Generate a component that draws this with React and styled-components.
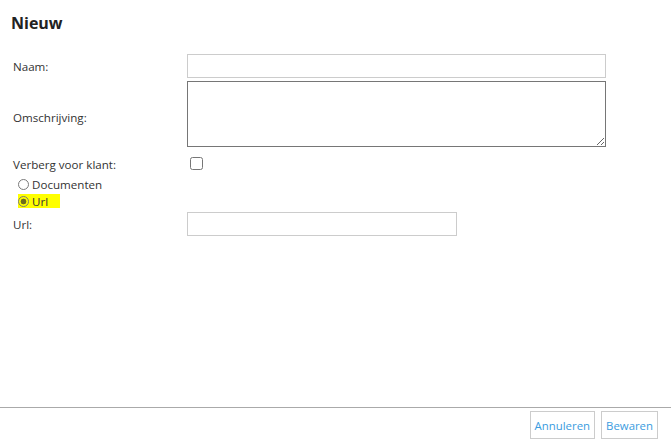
import React from 'react';
import styled, { createGlobalStyle } from 'styled-components';

const GlobalStyle = createGlobalStyle`
  html, body {
    margin: 0;
    padding: 0;
    background: #fff;
  }
  body {
    font-family: "Open Sans", "Liberation Sans", sans-serif;
    font-size: 11.6px;
    color: #333;
  }
`;

const Page = styled.div`
  display: flex;
  flex-direction: column;
  min-height: 100vh;
`;

const Content = styled.div`
  flex: 1;
`;

const Title = styled.h1`
  margin: 11px 0 19px 11px;
  font-size: 16px;
  line-height: 24px;
  font-weight: 700;
  color: #222;
`;

const Form = styled.form`
  display: flex;
  flex-direction: column;
  padding-left: 13px;
`;

const Row = styled.div`
  display: grid;
  grid-template-columns: 174px 1fr;
  align-items: center;
  margin-top: ${(p) => p.$mt || 0}px;
`;

const Label = styled.label`
  line-height: 17px;
  color: #333;
  padding-top: ${(p) => p.$offset || 0}px;
`;

const TextInput = styled.input`
  box-sizing: border-box;
  width: ${(p) => p.$width}px;
  height: 24px;
  margin: 0;
  border: 1px solid #ccc;
  padding: 2px 4px;
  font: inherit;
  outline: none;
`;

const TextArea = styled.textarea`
  box-sizing: border-box;
  width: 419px;
  height: 66px;
  margin: 0;
  border: 1px solid #767676;
  padding: 2px 4px;
  font: inherit;
  outline: none;
`;

const CheckBox = styled.input`
  width: 13px;
  height: 13px;
  margin: 0 0 0 3px;
`;

const RadioGroup = styled.div`
  display: flex;
  flex-direction: column;
  align-items: flex-start;
  margin-top: 3px;
  padding-left: 5px;
`;

const RadioOption = styled.label`
  display: inline-flex;
  align-items: center;
  height: ${(p) => (p.$highlight ? 14 : 17)}px;
  margin: ${(p) => (p.$highlight ? '1px 0 2px' : '0')};
  padding-right: ${(p) => (p.$highlight ? 12 : 0)}px;
  background: ${(p) => (p.$highlight ? '#ffff00' : 'transparent')};
  line-height: 17px;
  color: #333;
`;

const Radio = styled.input`
  appearance: none;
  box-sizing: border-box;
  width: 11px;
  height: 11px;
  margin: 0 3px 0 0;
  border: 1px solid #7a7a7a;
  border-radius: 50%;
  background: transparent;

  &:checked {
    background: radial-gradient(circle, rgba(60, 60, 40, 0.75) 0 2.6px, transparent 3.2px);
  }
`;

const Footer = styled.div`
  display: flex;
  justify-content: flex-end;
  gap: 6px;
  border-top: 1px solid #aaa;
  padding: 3px 13px 3px;
`;

const Button = styled.button`
  box-sizing: border-box;
  height: 28px;
  padding: 0 4px;
  border: 1px solid #ccc;
  background: #fff;
  color: #3a9ce0;
  font-family: "Open Sans", "Liberation Sans", sans-serif;
  font-size: 11.4px;
  cursor: pointer;
`;

export default function App() {
  return (
    <Page>
      <GlobalStyle />
      <Content>
        <Title>Nieuw</Title>
        <Form onSubmit={(e) => e.preventDefault()}>
          <Row>
            <Label htmlFor="naam">Naam:</Label>
            <TextInput id="naam" type="text" $width={419} />
          </Row>
          <Row $mt={3}>
            <Label htmlFor="omschrijving" $offset={6}>Omschrijving:</Label>
            <TextArea id="omschrijving" />
          </Row>
          <Row $mt={9}>
            <Label htmlFor="verberg">Verberg voor klant:</Label>
            <div>
              <CheckBox id="verberg" type="checkbox" />
            </div>
          </Row>
          <RadioGroup>
            <RadioOption>
              <Radio type="radio" name="soort" value="documenten" />
              Documenten
            </RadioOption>
            <RadioOption $highlight>
              <Radio type="radio" name="soort" value="url" defaultChecked />
              Url
            </RadioOption>
          </RadioGroup>
          <Row $mt={2}>
            <Label htmlFor="url">Url:</Label>
            <TextInput id="url" type="text" $width={270} />
          </Row>
        </Form>
      </Content>
      <Footer>
        <Button type="button">Annuleren</Button>
        <Button type="button">Bewaren</Button>
      </Footer>
    </Page>
  );
}
